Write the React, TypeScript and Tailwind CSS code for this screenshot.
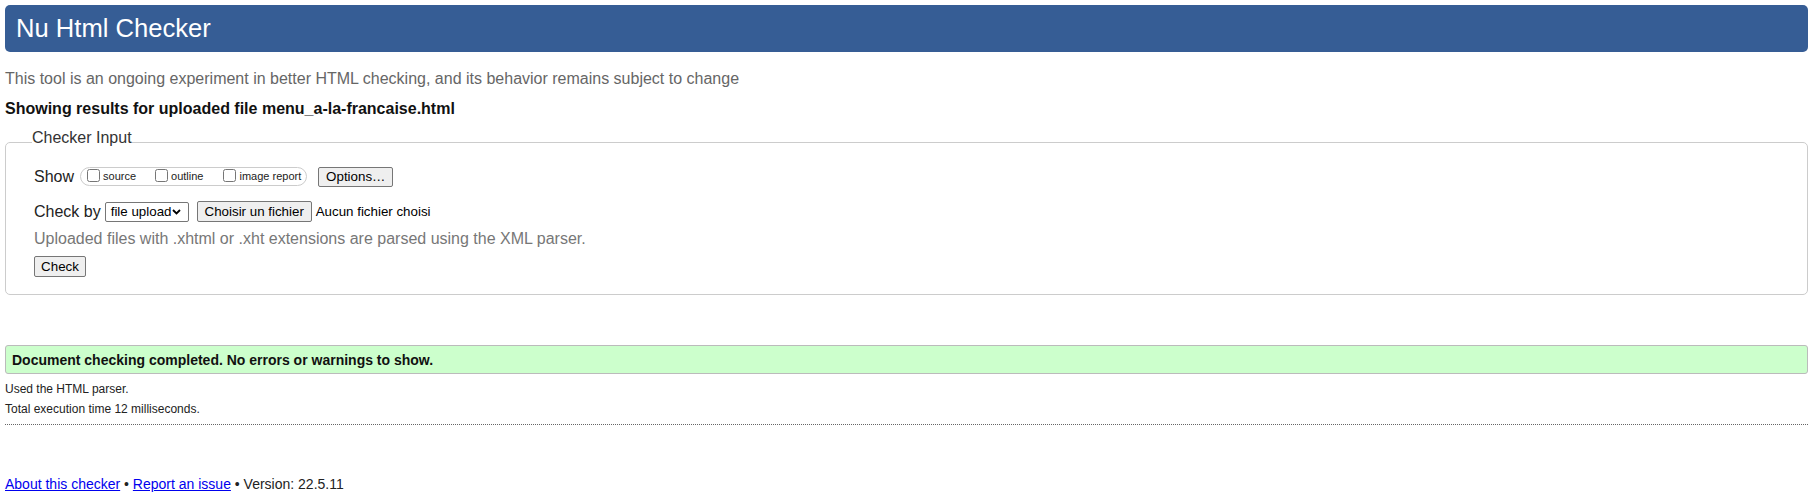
export default function App() {
  return (
    <div className="min-h-[501px] bg-white px-[5px] pt-[5px] font-['Liberation_Sans',Arial,sans-serif] text-[#222]">
      {/* Title bar */}
      <h1 className="h-[47px] rounded-[5px] bg-[#365d95] pl-[11px] text-[25.6px] leading-[47px] font-normal text-white">
        Nu Html Checker
      </h1>

      <p className="mt-[18px] text-[16px] leading-[18px] text-[#666]">
        This tool is an ongoing experiment in better HTML checking, and its behavior remains subject to change
      </p>
      <p className="mt-[12px] text-[16px] font-bold leading-[18px] text-[#111]">
        Showing results for uploaded file menu_a-la-francaise.html
      </p>

      {/* Checker input */}
      <fieldset className="mt-[11px] rounded-[5px] border border-[#ccc] pb-[16px] pl-[26px]">
        <legend className="pb-[9px] text-[16px] leading-[18px] text-[#333]">Checker Input</legend>

        <div className="mt-[10px] flex h-[21px] items-center pl-[2px]">
          <span className="text-[16px] leading-[18px]">Show</span>
          <div className="ml-[6px] flex h-[19px] items-center rounded-full border border-[#ccc] pl-[6px] pr-[5px] text-[11px] leading-[13px]">
            <input type="checkbox" className="mb-[2px] h-[13px] w-[13px]" />
            <span className="ml-[3px]">source</span>
            <input type="checkbox" className="mb-[2px] ml-[19px] h-[13px] w-[13px]" />
            <span className="ml-[3px]">outline</span>
            <input type="checkbox" className="mb-[2px] ml-[20px] h-[13px] w-[13px]" />
            <span className="ml-[3px]">image report</span>
          </div>
          <button className="ml-[11px] h-[20px] w-[75px] rounded-[2px] border border-[#767676] bg-[#efefef] text-[13.33px] leading-[15px] text-black">
            Options…
          </button>
        </div>

        <div className="mt-[14px] flex h-[21px] items-center pl-[2px]">
          <span className="text-[16px] leading-[18px]">Check by</span>
          <div className="ml-[4px] flex h-[20px] w-[84px] items-center justify-between rounded-[2px] border border-[#767676] bg-white pl-[5px] pr-[7px] text-[13.33px] leading-[15px] text-black">
            <span>file upload</span>
            <svg width="9" height="6" viewBox="0 0 9 6" fill="none">
              <path d="M1 1l3.5 3.5L8 1" stroke="#000" strokeWidth="1.8" />
            </svg>
          </div>
          <button className="ml-[8px] h-[21px] w-[115px] rounded-[2px] border border-[#767676] bg-[#efefef] text-[13.33px] leading-[15px] text-black">
            Choisir un fichier
          </button>
          <span className="ml-[4px] text-[13.33px] leading-[15px] text-black">Aucun fichier choisi</span>
        </div>

        <p className="mt-[8px] pl-[2px] text-[16px] leading-[18px] text-[#777]">
          Uploaded files with .xhtml or .xht extensions are parsed using the XML parser.
        </p>

        <div className="mt-[6px] pl-[2px]">
          <button className="h-[21px] w-[52px] rounded-[2px] border border-[#767676] bg-[#efefef] text-[13.33px] leading-[15px] text-black">
            Check
          </button>
        </div>
      </fieldset>

      {/* Result */}
      <div className="mt-[50px] flex h-[29px] items-center rounded-[3px] border border-[#bbb] bg-[#ccffcc] pl-[6px] text-[14px] font-bold leading-[16px] text-[#111]">
        Document checking completed. No errors or warnings to show.
      </div>

      <p className="mt-[8px] text-[12px] leading-[14px]">Used the HTML parser.</p>
      <p className="mt-[6px] text-[12px] leading-[14px]">Total execution time 12 milliseconds.</p>

      <div className="mt-[8px] border-t border-dotted border-[#666]" />

      <p className="mt-[51px] text-[14px] leading-[16px]">
        <a href="#" className="text-[#0000ee] underline">About this checker</a>
        {' • '}
        <a href="#" className="text-[#0000ee] underline">Report an issue</a>
        {' • Version: 22.5.11'}
      </p>
    </div>
  )
}
